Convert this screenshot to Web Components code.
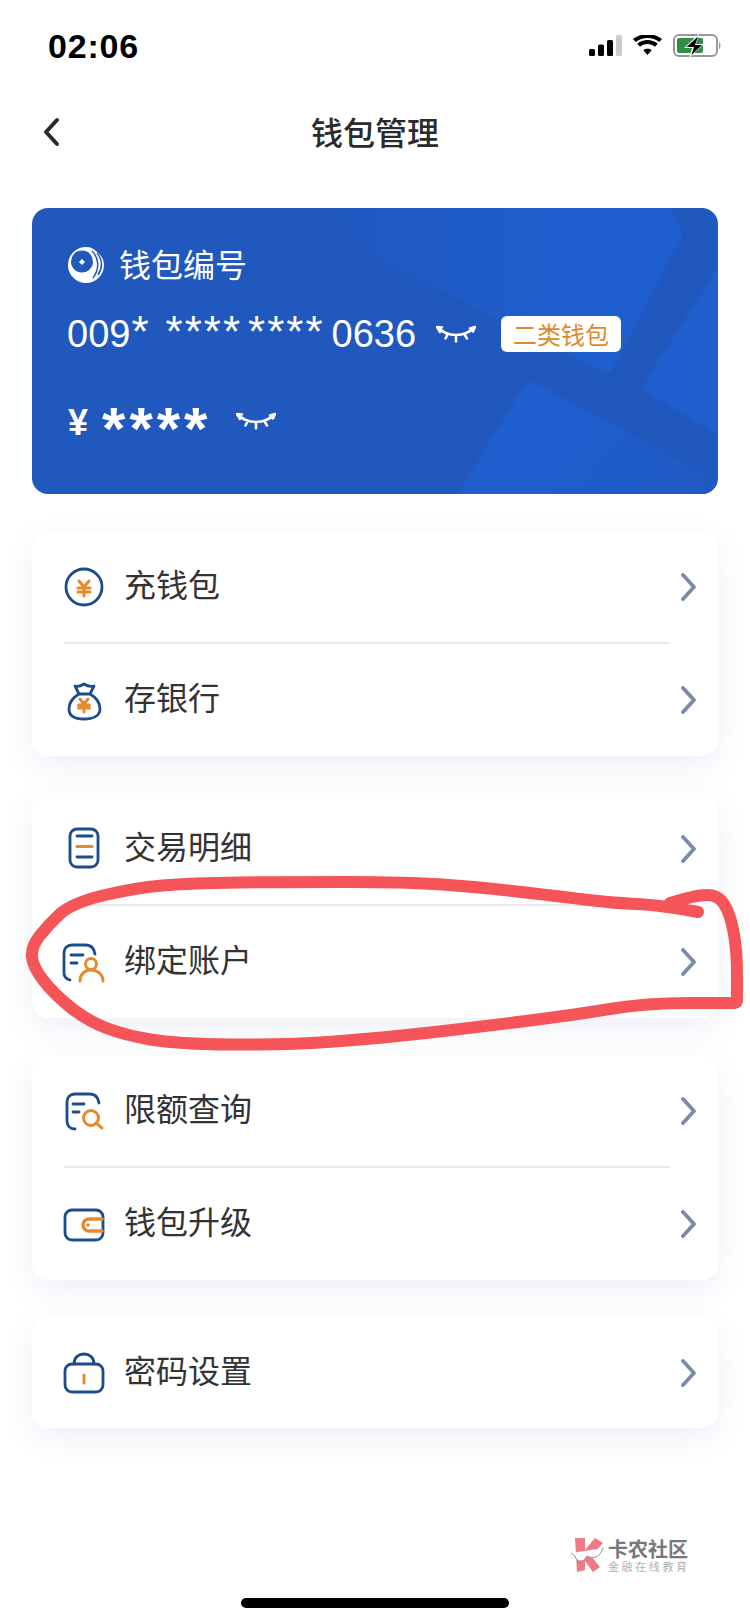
<!DOCTYPE html>
<html>
<head>
<meta charset="utf-8">
<style>
html, body { margin: 0; background: #fff; }
body { font-family: "Liberation Sans", "Noto Sans CJK SC", sans-serif; }
</style>
</head>
<body>
<wallet-page>
  <status-bar time="02:06"></status-bar>
  <nav-bar>钱包管理</nav-bar>
  <wallet-card></wallet-card>
  <menu-group>
    <menu-row label="充钱包"><svg viewBox="0 0 44 44"><circle class="b" cx="22" cy="22" r="18"/><path class="o" d="M17 16l5 6 5-6M16 23h12M16 27h12M22 22v9"/></svg></menu-row>
    <menu-row label="存银行" divided><svg viewBox="0 0 44 44"><path class="b" d="M17 16C10 20 7 26 7 31c0 7 6 10 15 10s16-3 16-10c0-5-3-11-10-15zM17 16l-4-8c3 1 6 0 9-2 3 2 6 3 10 2l-4 8"/><path class="o" d="M18 21l4 5 4-5M16.500 27h11M16.500 30h11M22 26v8"/></svg></menu-row>
  </menu-group>
  <menu-group>
    <menu-row label="交易明细"><svg viewBox="0 0 44 44"><rect class="b" x="8" y="2" width="28" height="38" rx="7"/><path class="b" d="M15 9h15M15 30h15"/><path class="o" d="M15 19.500h15"/></svg></menu-row>
    <menu-row label="绑定账户" divided><svg viewBox="0 0 44 44"><path class="b" d="M8 40C4 39 2 36 2 33V13c0-5 3-8 8-8h14c5 0 8 3 9 9M9 15h12M9 23h6"/><circle class="o" cx="29" cy="24" r="5.500"/><path class="o" d="M18 41c0-7 5-11 11-11s12 4 12 11"/></svg></menu-row>
  </menu-group>
  <menu-group>
    <menu-row label="限额查询"><svg viewBox="0 0 44 44"><path class="b" d="M13 40c-5 0-8-3-8-8V13c0-5 3-8 8-8h15c5 0 8 3 9 9M11 15h11M11 23h6"/><circle class="o" cx="29" cy="29" r="7.500"/><path class="o" d="M34 34l6 5"/></svg></menu-row>
    <menu-row label="钱包升级" divided><svg viewBox="0 0 44 44"><rect class="b" x="3" y="8" width="38" height="30" rx="7"/><path class="o" style="stroke-width:3.500" d="M40 17H27a6 6 0 0 0 0 12h13"/><circle class="od" cx="26" cy="23" r="1.800"/></svg></menu-row>
  </menu-group>
  <menu-group>
    <menu-row label="密码设置"><svg viewBox="0 0 44 44"><rect class="b" x="3" y="13" width="38" height="28" rx="7"/><path class="b" d="M12 13c0-7 5-10 10-10s10 3 10 10"/><path class="o" d="M22 24v8"/></svg></menu-row>
  </menu-group>
  <red-scribble></red-scribble>
  <water-mark></water-mark>
  <home-indicator></home-indicator>
</wallet-page>

<script>
class WalletPage extends HTMLElement {
    constructor() {
        super();
        this.attachShadow({mode: 'open'}).innerHTML = `<style>
:host { display: block; position: relative; width: 750px; height: 1624px; overflow: hidden; background: #fff; }
</style><slot></slot>`;
    }
}

class StatusBar extends HTMLElement {
    constructor() {
        super();
        this.attachShadow({mode: 'open'}).innerHTML = `<style>
:host { display: flex; align-items: center; justify-content: space-between; height: 88px; padding: 3px 28px 0 48px; box-sizing: border-box; }
.time { font: bold 34px/1 "Liberation Sans", sans-serif; letter-spacing: .8px; color: #000; }
.icons { display: flex; align-items: center; gap: 11px; margin-top: 1px; }
svg { display: block; }
</style>
<span class="time">${this.getAttribute('time')}</span>
<div class="icons">
  <svg width="33" height="22" viewBox="0 0 33 22"><rect x="0" y="14" width="6" height="7" rx="1.500"/><rect x="9" y="9.500" width="6" height="11.500" rx="1.500"/><rect x="18" y="5" width="6" height="16" rx="1.500"/><rect x="27" y="0" width="6" height="21" rx="1.500" fill="#ccc"/></svg>
  <svg width="29" height="22" viewBox="0 0 32 22"><path d="M16 21l-4.600-5.400c2.600-2.200 6.600-2.200 9.200 0zM7.800 11.700L4.700 8.400c6.400-5.400 16.200-5.400 22.600 0l-3.100 3.300c-4.600-3.800-11.800-3.800-16.400 0zM3 6.600L0 3.400c9-7.400 23-7.400 32 0l-3 3.200C21.600.6 10.400.6 3 6.600z"/></svg>
  <svg width="49" height="24" viewBox="0 0 49 24"><rect x="1" y="1" width="43" height="21" rx="5" fill="none" stroke="#999" stroke-width="2"/><rect x="4" y="4" width="26" height="15" rx="2" fill="#2f8f46"/><path d="M46 8c2 .6 2 6.400 0 7z" fill="#999"/><path d="M26 0L11 14h8l-3 10 15-14h-8z" fill="#fff"/><path d="M25 2.500L13.500 13h7.500l-2.500 8L29 11h-7z"/></svg>
</div>`;
    }
}

class NavBar extends HTMLElement {
    constructor() {
        super();
        this.attachShadow({mode: 'open'}).innerHTML = `<style>
:host { display: flex; align-items: center; justify-content: center; position: relative; height: 88px; }
.title { font: 500 32px/1 "Noto Sans CJK SC", sans-serif; color: #2b2b2b; margin-bottom: 2px; }
svg { position: absolute; left: 42px; top: 29px; }
</style>
<svg width="20" height="30" viewBox="0 0 20 30"><path d="M15 3L4 15l11 12" fill="none" stroke="#2b2b2b" stroke-width="4" stroke-linecap="round" stroke-linejoin="round"/></svg>
<span class="title"><slot></slot></span>`;
    }
}

const eye = `<svg width="40" height="20" viewBox="0 0 40 20"><path d="M1 3c5 5 12 8 19 8s14-3 19-8M1 3l5 .5M39 3l-5 1.500M39 3l-2 4.500M12 9.500l-2.500 5M20 11v6.500M28 9.500l3 5M1 3l3 5" fill="none" stroke="#fff" stroke-width="2.500" stroke-linecap="round"/></svg>`;

class WalletCard extends HTMLElement {
    constructor() {
        super();
        this.attachShadow({mode: 'open'}).innerHTML = `<style>
:host { display: block; position: relative; margin: 32px 32px 37px; height: 286px; border-radius: 16px; overflow: hidden; background: #2058be; color: #fff; }
.bg { position: absolute; left: 0; top: 0; }
.content { position: relative; display: flex; flex-direction: column; padding: 39px 0 0 36px; }
.head { display: flex; align-items: center; gap: 15px; height: 35px; font: 32px/35px "Noto Sans CJK SC", sans-serif; }
.head span { margin-top: -2px; }
.num { display: flex; align-items: center; margin-top: 32px; height: 40px; margin-left: -1px; font: 38px/40px "Liberation Sans", sans-serif; white-space: pre; }
.num b { font-weight: normal; font-size: 44px; margin-right: 6px; letter-spacing: 2px; position: relative; top: -2px; }
.num b:first-of-type { margin-left: 1px; margin-right: 15px; }
.num b:nth-of-type(3) { margin-right: 7px; }
.num svg { margin-left: 20px; }
.tag { margin-left: 25px; width: 120px; height: 36px; border-radius: 6px; background: #fff; color: #de8a2c; text-align: center; font: 24px/36px "Noto Sans CJK SC", sans-serif; }
.bal { display: flex; align-items: center; margin-top: 44px; height: 50px; font: bold 36px/50px "Liberation Sans", "Noto Sans CJK SC", sans-serif; }
.bal b { font-size: 60px; line-height: 50px; letter-spacing: 4px; margin-left: 14px; position: relative; top: 6px; }
.bal svg { margin-left: 25px; margin-top: -4px; }
</style>
<svg class="bg" width="686" height="286" viewBox="0 0 686 286">
  <defs>
    <linearGradient id="ga" gradientUnits="userSpaceOnUse" x1="300" y1="60" x2="530" y2="60"><stop offset="0" stop-color="#2058be"/><stop offset="1" stop-color="#1f5ecf"/></linearGradient>
    <linearGradient id="gb" gradientUnits="userSpaceOnUse" x1="560" y1="200" x2="670" y2="290"><stop offset="0" stop-color="#1f5ecf"/><stop offset="1" stop-color="#2059c2"/></linearGradient>
  </defs>
  <g stroke-width="16" stroke-linejoin="round">
    <path fill="url(#ga)" stroke="url(#ga)" d="M270 -20L620 -20L642 26L574 156L348 42z"/>
    <path fill="url(#gb)" stroke="url(#gb)" d="M499 182L420 310L720 310L690 285z"/>
    <path fill="#1f5ecf" stroke="#1f5ecf" d="M700 52L620 178L700 226z"/>
  </g>
</svg>
<div class="content">
  <div class="head">
    <svg width="36" height="36" viewBox="0 0 36 36"><circle cx="18" cy="18" r="18" fill="#fff"/><circle cx="14" cy="14.500" r="11" fill="#2058be"/><path d="M15 10.500l4.500 4.500-4.500 4.500-4.500-4.500zM22 0h14v14C33 8 28 3 22 0z" fill="#2058be"/><path d="M14 12l3 3-3 3-3-3z" fill="#fff"/><path d="M24 4c7 7 8 17 1 27M29 6c5 6 6 14 1 22" fill="none" stroke="#2058be" stroke-width="1.500"/></svg>
    <span>钱包编号</span>
  </div>
  <div class="num"><span>009</span><b>*</b><b>****</b><b>****</b><span>0636</span>${eye}<span class="tag">二类钱包</span></div>
  <div class="bal"><span>¥</span><b>****</b>${eye}</div>
</div>`;
    }
}

class MenuGroup extends HTMLElement {
    constructor() {
        super();
        this.attachShadow({mode: 'open'}).innerHTML = `<style>
:host { display: block; margin: 0 32px 37px; border-radius: 16px; background: #fff; box-shadow: 0 10px 30px rgba(70, 90, 170, .09); }
</style><slot></slot>`;
    }
}

class MenuRow extends HTMLElement {
    constructor() {
        super();
        const icon = this.querySelector('svg');
        this.attachShadow({mode: 'open'}).innerHTML = `<style>
:host { display: block; }
:host([divided]) .line { display: block; }
:host([divided]) .row { height: 112px; }
.line { display: none; height: 2px; margin: 0 48px 0 32px; background: #e9e9ee; }
.row { display: flex; align-items: center; height: 111px; padding: 0 20px 0 30px; }
.icon { width: 44px; height: 44px; margin-right: 18px; flex: none; }
.icon svg { display: block; width: 44px; height: 44px; fill: none; }
.b { stroke: #1b4c8c; stroke-width: 2.800; stroke-linecap: round; stroke-linejoin: round; fill: none; }
.o { stroke: #e68a2e; stroke-width: 3; stroke-linecap: round; stroke-linejoin: round; fill: none; }
.od { fill: #e68a2e; }
.label { flex: 1; font: 32px/1 "Noto Sans CJK SC", sans-serif; color: #333; padding-bottom: 8px; }
.arrow { display: block; }
</style>
<div class="line"></div>
<div class="row">
  <div class="icon">${icon ? icon.outerHTML : ''}</div>
  <span class="label">${this.getAttribute('label')}</span>
  <svg class="arrow" width="18" height="28" viewBox="0 0 18 28"><path d="M3 2l11 12L3 26" fill="none" stroke="#7a8ba8" stroke-width="3.800" stroke-linecap="round" stroke-linejoin="round"/></svg>
</div>`;
    }
}

class RedScribble extends HTMLElement {
    constructor() {
        super();
        const pts = [[698,912],[660,905],[612,903],[565,897],[478,887],[407,882],[287,882],[191,883],[134,888],[72,903],[48,925],[31,947],[33,967],[53,993],[86,1020],[124,1035],[177,1044],[287,1045],[383,1038],[478,1027],[574,1015],[646,1003],[732,1003],[737,1003],[737,998],[737,950],[730,913],[718,895],[698,895],[670,903]];
        let d = `M${pts[0]}`;
        for (let i = 1; i < pts.length - 1; i++) {
            const mx = (pts[i][0] + pts[i + 1][0]) / 2, my = (pts[i][1] + pts[i + 1][1]) / 2;
            d += `Q${pts[i]} ${mx},${my}`;
        }
        d += `L${pts[pts.length - 1]}`;
        this.attachShadow({mode: 'open'}).innerHTML = `<style>
:host { position: absolute; left: 0; top: 0; display: block; width: 750px; height: 1624px; pointer-events: none; }
</style>
<svg width="750" height="1624"><path d="${d}" fill="none" stroke="#f55459" stroke-width="12" stroke-linecap="round" stroke-linejoin="round"/></svg>`;
    }
}

class WaterMark extends HTMLElement {
    constructor() {
        super();
        this.attachShadow({mode: 'open'}).innerHTML = `<style>
:host { position: absolute; left: 571px; top: 1536px; display: flex; align-items: center; gap: 3px; }
.txt { display: flex; flex-direction: column; gap: 1px; font-family: "Noto Sans CJK SC", sans-serif; color: #77777a; }
.a { font: bold 20px/20px "Noto Sans CJK SC", sans-serif; letter-spacing: 0; }
.c { font-size: 11px; line-height: 12px; letter-spacing: 2.600px; color: #b0b0b4; }
</style>
<svg width="34" height="38" viewBox="0 0 34 38">
  <path d="M4 2H14V14L24 2L32 7L20 20L29 31L22 36L14 25V34L6 36z" fill="#ef7a85"/>
  <path d="M0 17L4 20C5 26 13 27 15 21L17 20C20 23 30 22 31 13L33 12" fill="#fff" stroke="#999" stroke-width="1"/>
</svg>
<div class="txt"><span class="a">卡农社区</span><span class="c">金融在线教育</span></div>`;
    }
}

class HomeIndicator extends HTMLElement {
    constructor() {
        super();
        this.attachShadow({mode: 'open'}).innerHTML = `<style>
:host { position: absolute; left: 241px; top: 1598px; display: block; width: 268px; height: 10px; border-radius: 5px; background: #000; }
</style>`;
    }
}

customElements.define('wallet-page', WalletPage);
customElements.define('status-bar', StatusBar);
customElements.define('nav-bar', NavBar);
customElements.define('wallet-card', WalletCard);
customElements.define('menu-group', MenuGroup);
customElements.define('menu-row', MenuRow);
customElements.define('red-scribble', RedScribble);
customElements.define('water-mark', WaterMark);
customElements.define('home-indicator', HomeIndicator);
</script>
</body>
</html>
